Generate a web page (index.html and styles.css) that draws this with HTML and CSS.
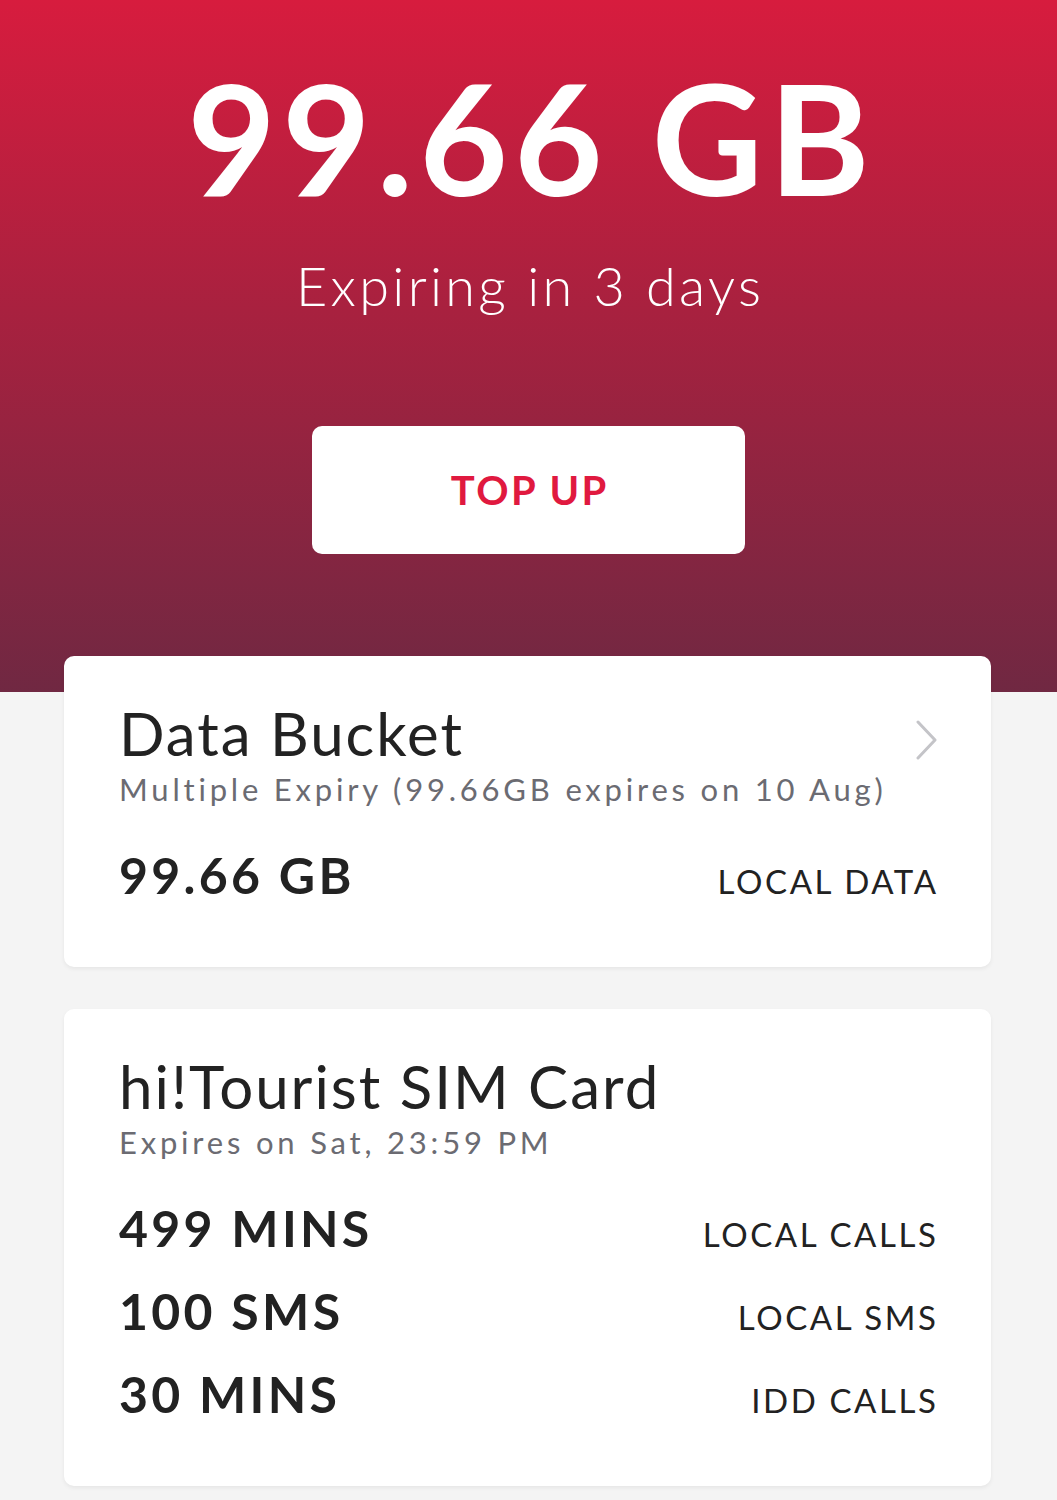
FILE: index.html
```html
<!DOCTYPE html>
<html lang="en">
<head>
    <meta charset="UTF-8">
    <meta name="viewport" content="width=device-width, initial-scale=1.0">
    <title>My Plan</title>
    <link rel="stylesheet" href="styles.css">
</head>
<body>

<div class="hero">
    <div class="hero-amount">99.66 GB</div>
    <div class="hero-expiry">Expiring in 3 days</div>
    <button class="topup-button">TOP UP</button>
</div>

<div class="cards">
    <div class="card">
        <div class="card-head">
            <div>
                <div class="card-title">Data Bucket</div>
                <div class="card-subtitle">Multiple Expiry (99.66GB expires on 10 Aug)</div>
            </div>
            <svg class="chevron" width="24" height="40" viewBox="0 0 24 40">
                <polyline points="4,2 21,20 4,38" fill="none" stroke="#c4c4c8" stroke-width="3" stroke-linecap="round" stroke-linejoin="round"/>
            </svg>
        </div>
        <div class="usage-list">
            <div class="usage-row">
                <span class="usage-value">99.66 GB</span>
                <span class="usage-label">LOCAL DATA</span>
            </div>
        </div>
    </div>

    <div class="card">
        <div class="card-head">
            <div>
                <div class="card-title">hi!Tourist SIM Card</div>
                <div class="card-subtitle">Expires on Sat, 23:59 PM</div>
            </div>
        </div>
        <div class="usage-list">
            <div class="usage-row">
                <span class="usage-value">499 MINS</span>
                <span class="usage-label">LOCAL CALLS</span>
            </div>
            <div class="usage-row">
                <span class="usage-value">100 SMS</span>
                <span class="usage-label">LOCAL SMS</span>
            </div>
            <div class="usage-row">
                <span class="usage-value">30 MINS</span>
                <span class="usage-label">IDD CALLS</span>
            </div>
        </div>
    </div>
</div>

</body>
</html>
```

FILE: styles.css
```css
body {
    margin: 0;
    font-family: Lato, "Open Sans", sans-serif;
    background-color: #f4f4f4;
    color: #222;
}
.hero {
    height: 692px;
    box-sizing: border-box;
    padding-top: 61px;
    display: flex;
    flex-direction: column;
    align-items: center;
    color: #fff;
    background: linear-gradient(to bottom, #d71c3e 0%, #a8213f 45%, #702842 100%);
}
.hero-amount {
    font-size: 153px;
    line-height: 153px;
    font-weight: 700;
    letter-spacing: 6px;
    margin-right: -6px; /* cancel trailing letter-spacing so it stays centred */
}
.hero-expiry {
    margin-top: 45px;
    font-size: 54px;
    line-height: 54px;
    font-weight: 300;
    letter-spacing: 3.3px;
    margin-right: -3.3px;
}
.topup-button {
    margin-top: 113px;
    width: 433px;
    height: 128px;
    border: none;
    border-radius: 10px;
    background: #fff;
    color: #e0193f;
    font-family: inherit;
    font-size: 40px;
    font-weight: 700;
    letter-spacing: 2.5px;
    text-indent: 2.5px;
    cursor: pointer;
}
.cards {
    margin-top: -36px;
    padding: 0 66px 40px 64px;
    display: flex;
    flex-direction: column;
    gap: 42px;
}
.card {
    background: #fff;
    border-radius: 10px;
    padding: 47px 55px 69px;
    box-shadow: 0 2px 4px rgba(0,0,0,0.06);
}
.card-head {
    display: flex;
    justify-content: space-between;
    align-items: flex-start;
}
.card-title {
    font-size: 60px;
    line-height: 60px;
    font-weight: 400;
    letter-spacing: 2px;
}
.card-subtitle {
    margin-top: 11px;
    font-size: 31px;
    line-height: 30px;
    color: #6b6b72;
    letter-spacing: 3.8px;
}
.chevron {
    margin-top: 17px;
    margin-right: -2px;
}
.usage-list {
    margin-top: 48px;
    display: flex;
    flex-direction: column;
    gap: 37px;
}
.usage-row {
    display: flex;
    justify-content: space-between;
    align-items: baseline;
}
.usage-value {
    font-size: 50px;
    line-height: 46px;
    font-weight: 700;
    letter-spacing: 3.3px;
}
.usage-label {
    font-size: 33px;
    line-height: 33px;
    font-weight: 400;
    letter-spacing: 2.6px;
    margin-right: -2.6px;
}
```
